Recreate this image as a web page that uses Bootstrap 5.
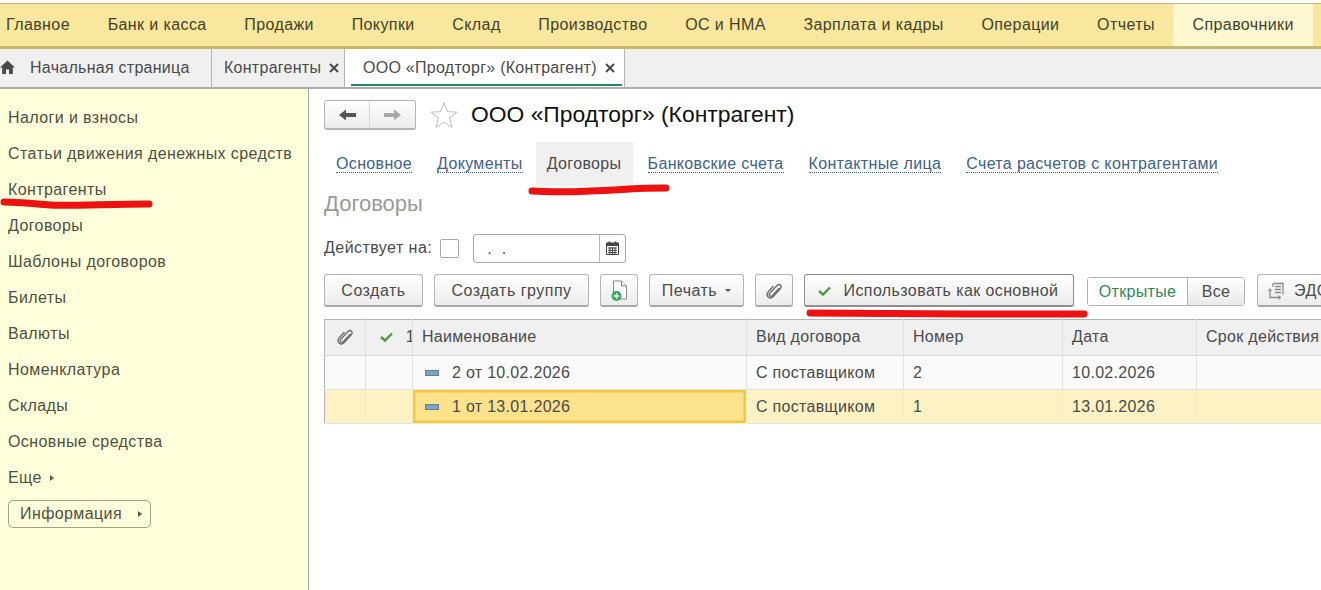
<!DOCTYPE html>
<html lang="ru">
<head>
    <meta charset="UTF-8">
    <meta name="viewport" content="width=device-width, initial-scale=1.0">
    <title>ООО «Продторг» (Контрагент)</title>
    <link href="https://cdn.jsdelivr.net/npm/bootstrap@5.3.3/dist/css/bootstrap.min.css" rel="stylesheet">
    <style>
        html, body { height: 590px; overflow: hidden; }
        body { font-family: "Liberation Sans", Arial, sans-serif; font-size: 16px; color: #4a4a4a; background: #fff; position: relative; }

        /* top menu */
        .top-menu { margin-top: 3px; height: 46px; background: #f8e79c; border-top: 1px solid #cdbb73; border-bottom: 3px solid #c9b56c; padding-left: 6px; color: #433f2a; letter-spacing: .4px; }
        .top-item { height: 100%; display: flex; align-items: center; margin-right: 37.7px; white-space: nowrap; }
        .top-item.on { background: #fdf8d2; margin: 0 0 0 -20px; padding: 0 20px; width: 140px; }

        /* open tabs */
        .tab-strip { height: 40px; background: #f0f0f0; border-bottom: 2px solid #adadad; color: #4a4a4a; letter-spacing: .27px; }
        .tab-cell { height: 100%; display: flex; align-items: center; border-right: 1px solid #b5b5b5; white-space: nowrap; }
        .tab-home { width: 212px; padding-left: 30px; position: relative; }
        .tab-home svg { position: absolute; left: 0; top: 11px; }
        .tab-list { width: 133px; padding-left: 12px; }
        .tab-cur { width: 280px; padding-left: 18px; background: #fff; position: relative; }
        .tab-cur::after { content: ""; position: absolute; left: 6px; right: 2px; bottom: 1px; height: 2px; background: #1f8a5f; }
        .tab-x { margin-left: 8px; flex: none; }

        /* left panel */
        .side-panel { width: 309px; flex: none; background: #ffffdc; border-right: 1px solid #a5a58c; padding: 11px 0 0 8px; height: 501px; letter-spacing: .4px; }
        .side-link { height: 36px; display: flex; align-items: center; color: #4f4f42; white-space: nowrap; }
        .info-btn { width: 143px; height: 28px; margin-top: 4px; border: 1px solid #a3a383; border-radius: 5px; padding-left: 11px; display: flex; align-items: center; color: #4f4f42; }
        .tri { width: 0; height: 0; border-left: 4px solid #555; border-top: 3.5px solid transparent; border-bottom: 3.5px solid transparent; display: inline-block; }

        /* form */
        .form-area { flex: 1; min-width: 0; padding: 11px 0 0 15px; overflow: hidden; }
        .nav-pair { width: 92px; height: 30px; border: 1px solid #b4b4b4; border-bottom-width: 2px; border-radius: 3px; background: linear-gradient(#fff, #ececec); display: flex; }
        .nav-pair span { flex: 1; display: flex; align-items: center; justify-content: center; }
        .nav-pair span:first-child { flex: none; width: 45px; border-right: 1px solid #d5d5d5; }
        .fav-star { margin-left: 14px; }
        .doc-title { font-size: 22.85px; line-height: 30px; color: #111; margin: -2px 0 0 13px; font-weight: 400; white-space: nowrap; }
        .sub-tabs { height: 44px; margin-top: 12px; padding-left: 12px; letter-spacing: .34px; }
        .sub-link { color: #3c6290; border-bottom: 1px dotted #3c6290; line-height: 17px; margin-right: 25px; white-space: nowrap; }
        .sub-cur { background: #f0f0f0; color: #4a4a4a; height: 44px; width: 97px; margin: 0 15px 0 -12px; display: flex; align-items: center; justify-content: center; }
        .group-head { font-size: 22px; line-height: 26px; color: #9a9a9a; margin: 5px 0 0; font-weight: 400; }
        .filter-row { height: 28px; margin-top: 17px; letter-spacing: .45px; }
        .tick-box { width: 19px; height: 19px; border: 1px solid #a8a8a8; border-radius: 2px; margin-left: 8px; background: #fff; }
        .date-box { width: 153px; height: 29px; margin-left: 14px; border: 1px solid #a8a8a8; border-radius: 3px; display: flex; }
        .date-val { width: 126px; padding-left: 13px; line-height: 28px; border-right: 1px solid #b8b8b8; }
        .date-btn { flex: 1; display: flex; align-items: center; justify-content: center; }

        .tool-row { margin-top: 12px; height: 34px; gap: 11px; }
        .tool-btn { height: 33px; padding: 1px 0 0; border: 1px solid #b4b4b4; border-bottom: 2px solid #a8a8a8; border-radius: 3px; background: linear-gradient(#fff, #ececec); color: #4a4a4a; font-size: 16px; display: flex; align-items: center; justify-content: center; white-space: nowrap; flex: none; letter-spacing: .5px; }
        .tool-main { border-color: #8e8e8e; letter-spacing: .4px; padding-right: 2px; }
        .tool-main svg { margin-right: 13px; }
        .drop-caret { width: 0; height: 0; margin-left: 8px; border-left: 3px solid transparent; border-right: 3px solid transparent; border-top: 3px solid #555; }
        .tool-edo { margin-left: 1px; justify-content: flex-start; padding-left: 9px; }
        .switch-pair { height: 29px; width: 158px; margin: 3px 0 0 2px; border: 1px solid #b4b4b4; border-radius: 3px; display: flex; flex: none; }
        .switch-pair span { display: flex; align-items: center; justify-content: center; letter-spacing: .3px; }
        .switch-on { width: 100px; color: #2a8a5c; background: #fff; border-right: 1px solid #b4b4b4; }
        .switch-off { flex: 1; background: linear-gradient(#fff, #e9e9e9); }

        /* list */
        .list-wrap { margin-top: 11px; width: 1000px; }
        .doc-table { table-layout: fixed; width: 1000px; margin: 0; border-top: 1px solid #b4b4b4; border-left: 1px solid #b4b4b4; }
        .doc-table th, .doc-table td { padding: 0 0 0 9px; font-weight: 400; white-space: nowrap; overflow: hidden; color: #4a4a4a; background: transparent; box-shadow: none; border-bottom: 1px solid #e2e2e2; border-right: 1px solid #e0e0e0; vertical-align: middle; letter-spacing: .3px; }
        .doc-table th { height: 36px; padding-bottom: 2px; background: #f0f0f0; border-bottom-color: #d8d8d8; }
        .doc-table td { height: 34px; }
        .doc-table .clip-head { padding-left: 0; }
        .doc-table .mark-head { padding-left: 14px; }
        .doc-table tr.row-plain td { background: #fafafa; }
        .doc-table tr.row-sel td { background: #fdf2c4; border-right-color: #f6ecc4; }
        .doc-table tr.row-sel td.cell-focus { background: #fde28c; box-shadow: inset 0 0 0 2.5px #f2c744; border-color: #fdf2c4; }
        .doc-table .name-cell { padding-left: 12px; }
        .item-mark { display: inline-block; width: 14px; height: 6px; background: #7ba3c4; border: 1px solid #5e7f99; margin-right: 13px; vertical-align: 2px; }

        .red-marks { position: absolute; left: 0; top: 0; pointer-events: none; filter: blur(.7px); }
    </style>
</head>
<body>
    <!-- Sections -->
    <div class="top-menu d-flex">
        <div class="top-item">Главное</div>
        <div class="top-item">Банк и касса</div>
        <div class="top-item">Продажи</div>
        <div class="top-item">Покупки</div>
        <div class="top-item">Склад</div>
        <div class="top-item">Производство</div>
        <div class="top-item">ОС и НМА</div>
        <div class="top-item">Зарплата и кадры</div>
        <div class="top-item">Операции</div>
        <div class="top-item">Отчеты</div>
        <div class="top-item on">Справочники</div>
    </div>

    <!-- Open windows -->
    <div class="tab-strip d-flex">
        <div class="tab-cell tab-home">
            <svg width="15" height="14" viewBox="0 0 15 14"><path d="M7.5 0.5 L15 7.5 H12.8 V14 H9 V9.5 H6 V14 H2.2 V7.5 H0 Z" fill="#4a4a4a"/></svg>
            Начальная страница
        </div>
        <div class="tab-cell tab-list">
            Контрагенты
            <svg class="tab-x" width="10" height="10" viewBox="0 0 10 10"><path d="M1 1 L9 9 M9 1 L1 9" stroke="#4a4a4a" stroke-width="2"/></svg>
        </div>
        <div class="tab-cell tab-cur">
            ООО «Продторг» (Контрагент)
            <svg class="tab-x" width="10" height="10" viewBox="0 0 10 10"><path d="M1 1 L9 9 M9 1 L1 9" stroke="#4a4a4a" stroke-width="2"/></svg>
        </div>
    </div>

    <div class="d-flex">
        <!-- Section panel -->
        <div class="side-panel">
            <div class="side-link">Налоги и взносы</div>
            <div class="side-link">Статьи движения денежных средств</div>
            <div class="side-link">Контрагенты</div>
            <div class="side-link">Договоры</div>
            <div class="side-link">Шаблоны договоров</div>
            <div class="side-link">Билеты</div>
            <div class="side-link">Валюты</div>
            <div class="side-link">Номенклатура</div>
            <div class="side-link">Склады</div>
            <div class="side-link">Основные средства</div>
            <div class="side-link">Еще <span class="tri ms-2"></span></div>
            <div class="info-btn">Информация <span class="tri ms-3"></span></div>
        </div>

        <!-- Form -->
        <div class="form-area">
            <div class="d-flex align-items-center">
                <div class="nav-pair">
                    <span><svg width="17" height="12" viewBox="0 0 17 12"><path d="M0 6 L7 0.5 V4 H17 V8 H7 V11.5 Z" fill="#555"/></svg></span>
                    <span><svg width="17" height="12" viewBox="0 0 17 12"><path d="M17 6 L10 0.5 V4 H0 V8 H10 V11.5 Z" fill="#a8a8a8"/></svg></span>
                </div>
                <svg class="fav-star" width="28" height="28" viewBox="0 0 30 30"><path d="M15 2 L18.8 11.2 L28.6 12 L21.2 18.4 L23.4 28 L15 22.9 L6.6 28 L8.8 18.4 L1.4 12 L11.2 11.2 Z" fill="#fff" stroke="#c4c4c4" stroke-width="1.2"/></svg>
                <h1 class="doc-title">ООО «Продторг» (Контрагент)</h1>
            </div>

            <div class="sub-tabs d-flex align-items-center">
                <a class="sub-link text-decoration-none">Основное</a>
                <a class="sub-link text-decoration-none">Документы</a>
                <div class="sub-cur">Договоры</div>
                <a class="sub-link text-decoration-none">Банковские счета</a>
                <a class="sub-link text-decoration-none">Контактные лица</a>
                <a class="sub-link text-decoration-none">Счета расчетов с контрагентами</a>
            </div>

            <h2 class="group-head">Договоры</h2>

            <div class="filter-row d-flex align-items-center">
                <span>Действует на:</span>
                <div class="tick-box"></div>
                <div class="date-box">
                    <div class="date-val">.&nbsp;&nbsp;.</div>
                    <div class="date-btn">
                        <svg width="13" height="14" viewBox="0 0 13 14"><path d="M0.5 2 H12.5 V13.5 H0.5 Z" fill="#fff" stroke="#444"/><rect x="0.5" y="2" width="12" height="3" fill="#444"/><rect x="2.5" y="0.5" width="2" height="3" fill="#444"/><rect x="8.5" y="0.5" width="2" height="3" fill="#444"/><path d="M2 7 H11 M2 9.3 H11 M2 11.6 H11 M4 6 V13 M6.5 6 V13 M9 6 V13" stroke="#444" stroke-width="1"/></svg>
                    </div>
                </div>
            </div>

            <div class="tool-row d-flex align-items-start">
                <button class="btn tool-btn" style="width: 99px">Создать</button>
                <button class="btn tool-btn" style="width: 155px">Создать группу</button>
                <button class="btn tool-btn" style="width: 38px">
                    <svg width="18" height="22" viewBox="0 0 18 22"><path d="M3.5 1 H11.5 L16.5 6 V19 H3.5 Z" fill="#fff" stroke="#8a8a8a"/><path d="M11.5 1 V6 H16.5" fill="#eee" stroke="#8a8a8a"/><circle cx="6.5" cy="16" r="5" fill="#3aa655"/><path d="M6.5 13.2 V18.8 M3.7 16 H9.3" stroke="#fff" stroke-width="1.5"/></svg>
                </button>
                <button class="btn tool-btn" style="width: 95px">Печать<span class="drop-caret"></span></button>
                <button class="btn tool-btn" style="width: 38px">
                    <svg width="18" height="18" viewBox="0 0 18 18"><path d="M14.5 6 L7.5 13.5 C5.5 15.5 3 13 5 11 L12 3.5 C14.8 1 17.5 4 15.2 6.8 L8 14.8 C4.8 17.8 0 14 3.2 9.8 L8.5 4" fill="none" stroke="#6e6e6e" stroke-width="1.4"/></svg>
                </button>
                <button class="btn tool-btn tool-main" style="width: 270px">
                    <svg width="13" height="10" viewBox="0 0 13 10"><path d="M1 5 L5 8.5 L12 1.5" fill="none" stroke="#4f9a3a" stroke-width="2.4"/></svg>
                    Использовать как основной
                </button>
                <div class="switch-pair">
                    <span class="switch-on">Открытые</span>
                    <span class="switch-off">Все</span>
                </div>
                <button class="btn tool-btn tool-edo" style="width: 90px">
                    <svg class="me-2" width="19" height="18" viewBox="0 0 19 18"><path d="M6 1.5 H16 V12.5 M6 1.5 V5 M8 4.5 H14 M8 7.5 H14 M8 10.5 H14 M3 8 V15.5 H13" fill="none" stroke="#8a8a8a" stroke-width="1.3"/><path d="M1 9 L3 6.5 L5 9 M11 13.5 L14 15.5 L11 17.5" fill="none" stroke="#8a8a8a"/></svg>
                    ЭДО
                </button>
            </div>

            <div class="list-wrap">
                <table class="table doc-table">
                    <colgroup>
                        <col style="width: 41px"><col style="width: 47px"><col style="width: 334px">
                        <col style="width: 157px"><col style="width: 159px"><col style="width: 134px"><col style="width: 128px">
                    </colgroup>
                    <thead>
                        <tr>
                            <th class="text-center clip-head">
                                <svg width="18" height="18" viewBox="0 0 18 18"><path d="M14.5 6 L7.5 13.5 C5.5 15.5 3 13 5 11 L12 3.5 C14.8 1 17.5 4 15.2 6.8 L8 14.8 C4.8 17.8 0 14 3.2 9.8 L8.5 4" fill="none" stroke="#6e6e6e" stroke-width="1.4"/></svg>
                            </th>
                            <th class="mark-head">
                                <svg width="13" height="10" viewBox="0 0 13 10"><path d="M1 5 L5 8.5 L12 1.5" fill="none" stroke="#4f9a3a" stroke-width="2.4"/></svg>
                                <span class="ms-2">1</span>
                            </th>
                            <th>Наименование</th>
                            <th>Вид договора</th>
                            <th>Номер</th>
                            <th>Дата</th>
                            <th>Срок действия</th>
                        </tr>
                    </thead>
                    <tbody>
                        <tr class="row-plain">
                            <td></td><td></td>
                            <td class="name-cell"><span class="item-mark"></span>2 от 10.02.2026</td>
                            <td>С поставщиком</td><td>2</td><td>10.02.2026</td><td></td>
                        </tr>
                        <tr class="row-sel">
                            <td></td><td></td>
                            <td class="name-cell cell-focus"><span class="item-mark"></span>1 от 13.01.2026</td>
                            <td>С поставщиком</td><td>1</td><td>13.01.2026</td><td></td>
                        </tr>
                    </tbody>
                </table>
            </div>
        </div>
    </div>

    <!-- Red marker strokes drawn over the screenshot -->
    <svg class="red-marks" width="1321" height="590" viewBox="0 0 1321 590">
        <g fill="none" stroke="#ee1111" stroke-linecap="round">
            <path d="M4 202 C20 202 35 204 50 205 C70 206 110 204 149 204" stroke-width="7"/>
            <path d="M532 191 C560 193 600 191 630 189 C645 188 655 188 666 188" stroke-width="7"/>
            <path d="M810 313 C880 314 1000 314 1084 314" stroke-width="7"/>
        </g>
    </svg>

    <script src="https://cdn.jsdelivr.net/npm/bootstrap@5.3.3/dist/js/bootstrap.bundle.min.js"></script>
</body>
</html>
